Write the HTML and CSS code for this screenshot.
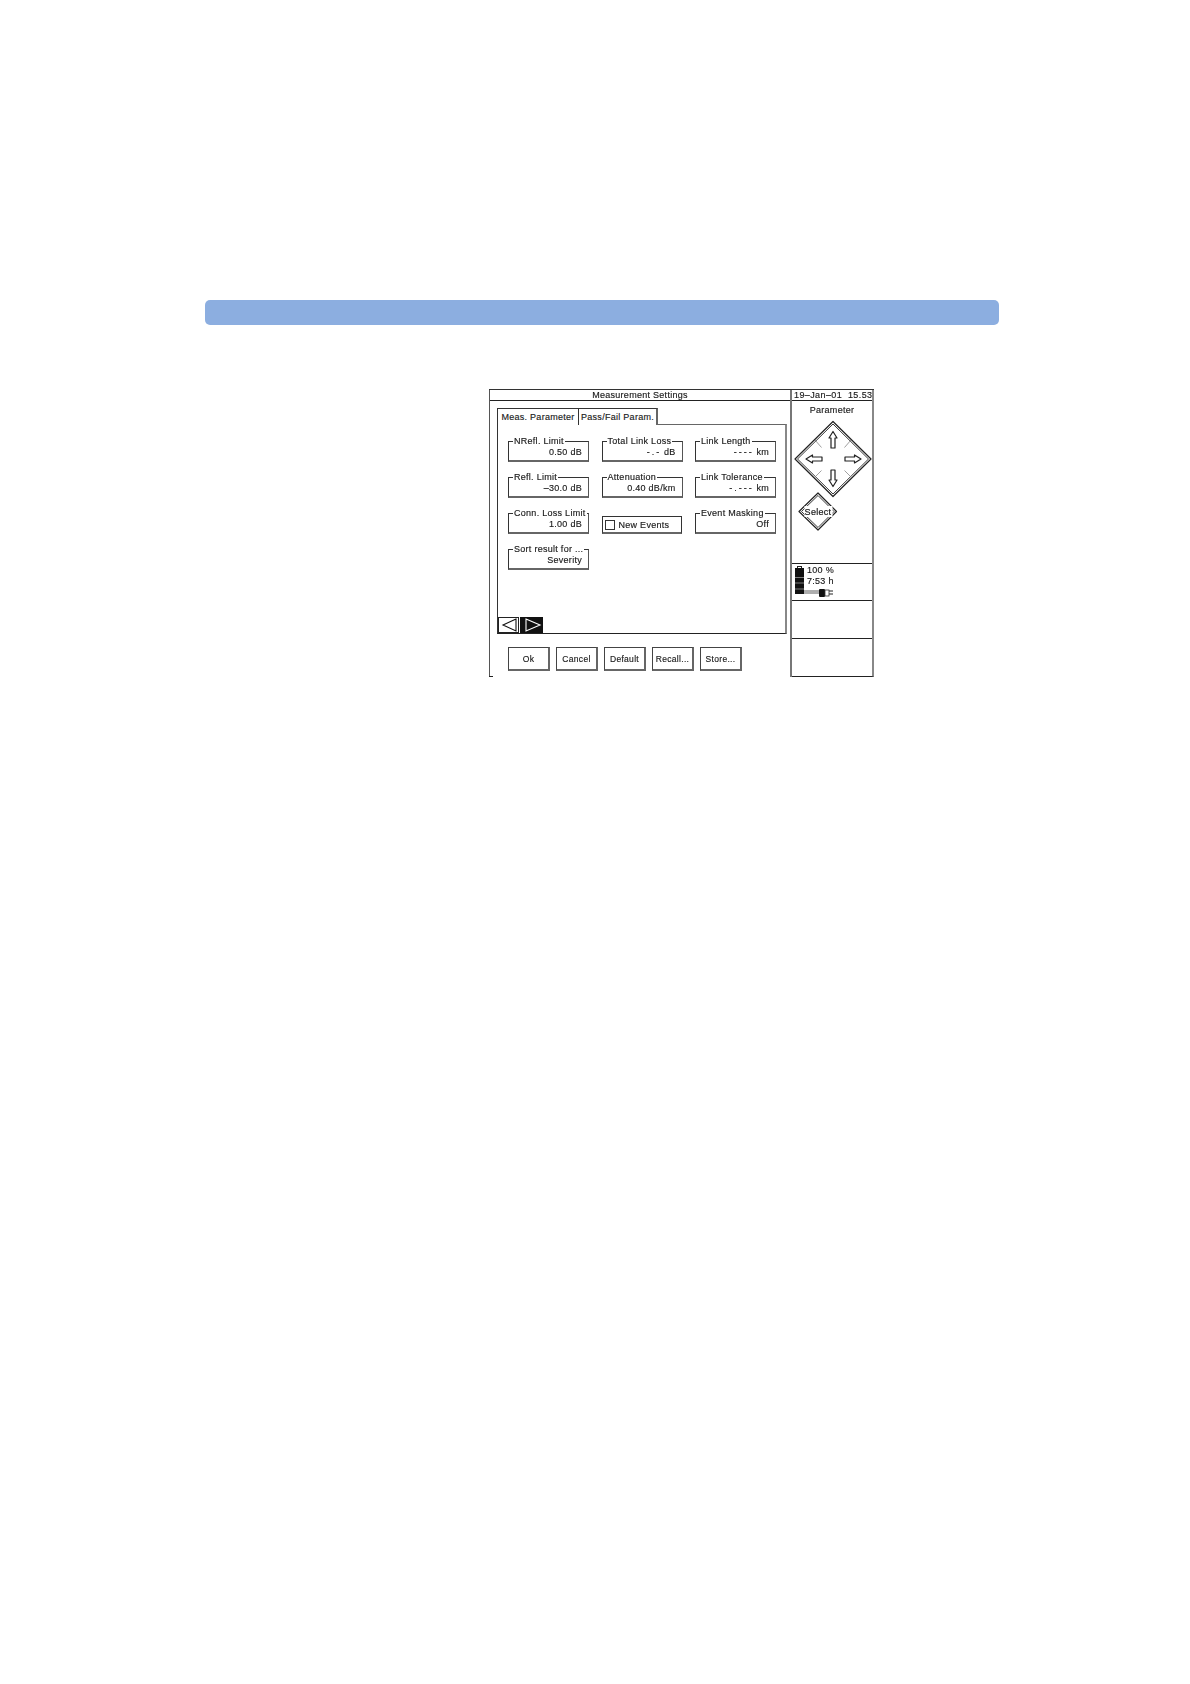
FILE: index.html
```html
<!DOCTYPE html>
<html lang="en">
<head>
<meta charset="utf-8">
<title>Measurement Settings</title>
<link rel="stylesheet" href="styles.css">
</head>
<body>
<div class="bar"></div>
<div class="screen">
  <div class="main">
    <div class="title">Measurement Settings</div>
    <div class="tabs">
      <div class="tab tab-first">Meas. Parameter</div>
      <div class="tab tab-second">Pass/Fail Param.</div>
    </div>
    <div class="panel">
      <div class="fields">
        <div class="field"><span class="legend">NRefl. Limit</span><span class="value">0.50 dB</span></div>
        <div class="field"><span class="legend">Total Link Loss</span><span class="value"><span class="dash">-.-</span> dB</span></div>
        <div class="field"><span class="legend">Link Length</span><span class="value"><span class="dash">----</span> km</span></div>
        <div class="field"><span class="legend">Refl. Limit</span><span class="value">–30.0 dB</span></div>
        <div class="field"><span class="legend">Attenuation</span><span class="value">0.40 dB/km</span></div>
        <div class="field"><span class="legend">Link Tolerance</span><span class="value"><span class="dash">-.---</span> km</span></div>
        <div class="field"><span class="legend">Conn. Loss Limit</span><span class="value">1.00 dB</span></div>
        <div class="check"><span class="box"></span><span>New Events</span></div>
        <div class="field"><span class="legend">Event Masking</span><span class="value">Off</span></div>
        <div class="field"><span class="legend">Sort result for ...</span><span class="value">Severity</span></div>
      </div>
      <div class="pager">
        <svg class="page page-prev" viewBox="0 0 21 16" width="21" height="16"><rect x="0.5" y="0.5" width="20" height="15" fill="#fff" stroke="#222" stroke-width="1"/><path d="M18 2 L5 8 L18 14 Z" fill="#fff" stroke="#111" stroke-width="1.1"/></svg>
        <svg class="page page-next" viewBox="0 0 23 16" width="23" height="16"><rect width="23" height="16" fill="#111"/><path d="M6 2 L20 8 L6 14 Z" fill="#111" stroke="#fff" stroke-width="1.1"/></svg>
      </div>
    </div>
    <div class="buttons">
      <div class="btn">Ok</div>
      <div class="btn">Cancel</div>
      <div class="btn">Default</div>
      <div class="btn">Recall...</div>
      <div class="btn">Store...</div>
    </div>
  </div>
  <div class="side">
    <div class="date">19–Jan–01  15.53</div>
    <div class="nav">
      <div class="nav-label">Parameter</div>
      <svg class="pad" viewBox="793 419 80 116" width="80" height="116">
        <g fill="none" stroke="#222" stroke-linejoin="round">
          <path d="M833 421.5 L871 459 L833 496.5 L795 459 Z" stroke-width="1.2"/>
          <path d="M833 424 L868.5 459 L833 494 L797.5 459 Z" stroke-width="0.9"/>
          <path d="M833 431.5 L837 438 L835 438 L835 448 L831 448 L831 438 L829 438 Z" stroke-width="1.2"/>
          <path d="M833 486.5 L837 480 L835 480 L835 470 L831 470 L831 480 L829 480 Z" stroke-width="1.2"/>
          <path d="M806 459 L812.5 455 L812.5 457 L822 457 L822 461 L812.5 461 L812.5 463 Z" stroke-width="1.2"/>
          <path d="M861 459 L854.5 455 L854.5 457 L845 457 L845 461 L854.5 461 L854.5 463 Z" stroke-width="1.2"/>
          <path d="M815 440 L821.5 447.5 M851 440 L844.5 447.5 M821.5 470.5 L815 477 M844.5 470.5 L851 477" stroke="#777" stroke-width="0.7"/>
          <path d="M818 493 L836.5 511.5 L818 530 L799 511.5 Z" stroke-width="1.2"/>
          <path d="M818 495.5 L834 511.5 L818 527.5 L801.5 511.5 Z" stroke-width="0.9"/>
        </g>
        <rect x="804.5" y="506" width="28" height="11" fill="#fff"/>
        <text class="pad-text" x="818" y="515" text-anchor="middle">Select</text>
      </svg>
    </div>
    <div class="status">
      <svg class="battery" viewBox="0 0 9 28" width="9" height="28">
        <rect x="2.5" y="0.5" width="4" height="2" fill="#fff" stroke="#222" stroke-width="1"/>
        <rect x="0" y="2" width="9" height="26" fill="#111"/>
        <path d="M0 11.5 H9 M0 17 H9 M0 23 H9" stroke="#999" stroke-width="0.8"/>
      </svg>
      <div class="status-text">
        <div>100 %</div>
        <div>7:53 h</div>
        <svg class="plug" viewBox="804 588 30 10" width="30" height="10">
          <path d="M804 591 H819 M804 593 H819" stroke="#333" stroke-width="0.8" fill="none"/>
          <rect x="819" y="589" width="6" height="8" rx="1" fill="#111"/>
          <rect x="825" y="590" width="4" height="6" fill="#fff" stroke="#333" stroke-width="0.8"/>
          <path d="M829 591 H833 M829 594 H833" stroke="#222" stroke-width="1"/>
        </svg>
      </div>
    </div>
    <div class="slot"></div>
    <div class="slot"></div>
  </div>
</div>
</body>
</html>
```
FILE: styles.css
```css
* { box-sizing: border-box; }
html, body { margin: 0; padding: 0; background: #fff; }
body {
  padding-top: 300px;
  height: 1684px;
  font-family: "Liberation Sans", Arial, sans-serif;
  overflow: hidden;
}
.bar {
  margin-left: 205px;
  width: 794px;
  height: 25px;
  background: #8caee0;
  border-radius: 5px;
}
.screen {
  margin: 64px 0 0 489px;
  width: 385px;
  height: 287px;
  display: grid;
  grid-template-columns: 303px 82px;
  border-top: 1px solid #333;
  color: #1a1a1a;
  font-size: 9px;
  line-height: 10px;
  letter-spacing: 0.28px;
  -webkit-text-stroke: 0.15px #1a1a1a;
  filter: blur(0.3px);
}
.main {
  position: relative;
  border-left: 1px solid #555;
  border-right: 2px solid #777;
}
.main::after {
  content: "";
  position: absolute;
  left: -1px;
  bottom: 0;
  width: 4px;
  height: 1px;
  background: #222;
}
.title {
  height: 11px;
  border-bottom: 1px solid #222;
  text-align: center;
  font-size: 9px;
}
.tabs {
  display: flex;
  margin: 7px 0 -1px 7px;
  position: relative;
  z-index: 1;
}
.tab {
  height: 17px;
  background: #fff;
  border-top: 1px solid #333;
  border-left: 1px solid #333;
  padding-top: 3px;
  text-align: center;
}
.tab-first { width: 81px; }
.tab-second { width: 80px; border-right: 2px solid #666; }
.panel {
  margin-left: 7px;
  width: 290px;
  height: 210px;
  border: 1px solid #666;
  border-left-color: #333;
  border-bottom-color: #222;
  border-right: 2px solid #888;
  padding: 16px 0 0 0;
  display: flex;
  flex-direction: column;
}
.fields {
  margin-left: 10px;
  display: grid;
  grid-template-columns: repeat(3, 81px);
  grid-auto-rows: 21px;
  column-gap: 12.5px;
  row-gap: 15px;
}
.field {
  display: flex;
  flex-direction: column;
  border: 1px solid #333;
  border-right: 1px solid #555;
  border-bottom: 2px solid #666;
  padding: 0 6px 0 0;
}
.legend {
  align-self: flex-start;
  margin: -6px 0 0 4px;
  padding: 0 1px;
  height: 10px;
  background: #fff;
  white-space: nowrap;
}
.value {
  margin-top: 1px;
  text-align: right;
  white-space: nowrap;
}
.dash { letter-spacing: 2px; }
.check {
  align-self: end;
  height: 18px;
  width: 80px;
  display: flex;
  align-items: center;
  gap: 4px;
  padding-left: 2px;
  border: 1px solid #333;
  border-bottom: 2px solid #666;
}
.box {
  width: 10px;
  height: 10px;
  border: 1px solid #333;
  background: #fff;
  flex: none;
}
.pager {
  margin-top: auto;
  display: flex;
  gap: 1px;
  height: 16px;
}
.page { display: block; flex: none; }
.buttons {
  display: flex;
  gap: 6px;
  margin: 13px 0 0 18px;
}
.btn {
  width: 42px;
  height: 24px;
  padding-top: 1px;
  display: flex;
  align-items: center;
  justify-content: center;
  border: 1px solid #444;
  border-right: 2px solid #666;
  border-bottom: 2px solid #666;
  white-space: nowrap;
  font-size: 8.5px;
  letter-spacing: 0.3px;
}
.side {
  display: flex;
  flex-direction: column;
  border-right: 2px solid #888;
  border-bottom: 1px solid #222;
}
.date {
  height: 11px;
  border-bottom: 1px solid #222;
  white-space: pre;
  padding-left: 2px;
  letter-spacing: 0.4px;
}
.nav {
  height: 163px;
  border-bottom: 1px solid #222;
}
.nav-label {
  text-align: center;
  margin-top: 4px;
  height: 11px;
}
.pad { display: block; margin: 3px 0 0 1px; }
.pad-text {
  font-family: "Liberation Sans", Arial, sans-serif;
  font-size: 9px;
  letter-spacing: 0.3px;
  fill: #1a1a1a;
  stroke: #1a1a1a;
  stroke-width: 0.2px;
}
.status {
  height: 37px;
  border-bottom: 1px solid #222;
  display: flex;
  padding: 0 0 0 3px;
}
.battery { display: block; flex: none; margin-top: 2px; }
.status-text {
  padding-left: 3px;
  padding-top: 1px;
  line-height: 10.5px;
}
.plug { display: block; margin: 2px 0 0 -3px; }
.slot {
  height: 38px;
  border-bottom: 1px solid #222;
}
.slot:last-child { border-bottom: 0; height: 37px; }
```
